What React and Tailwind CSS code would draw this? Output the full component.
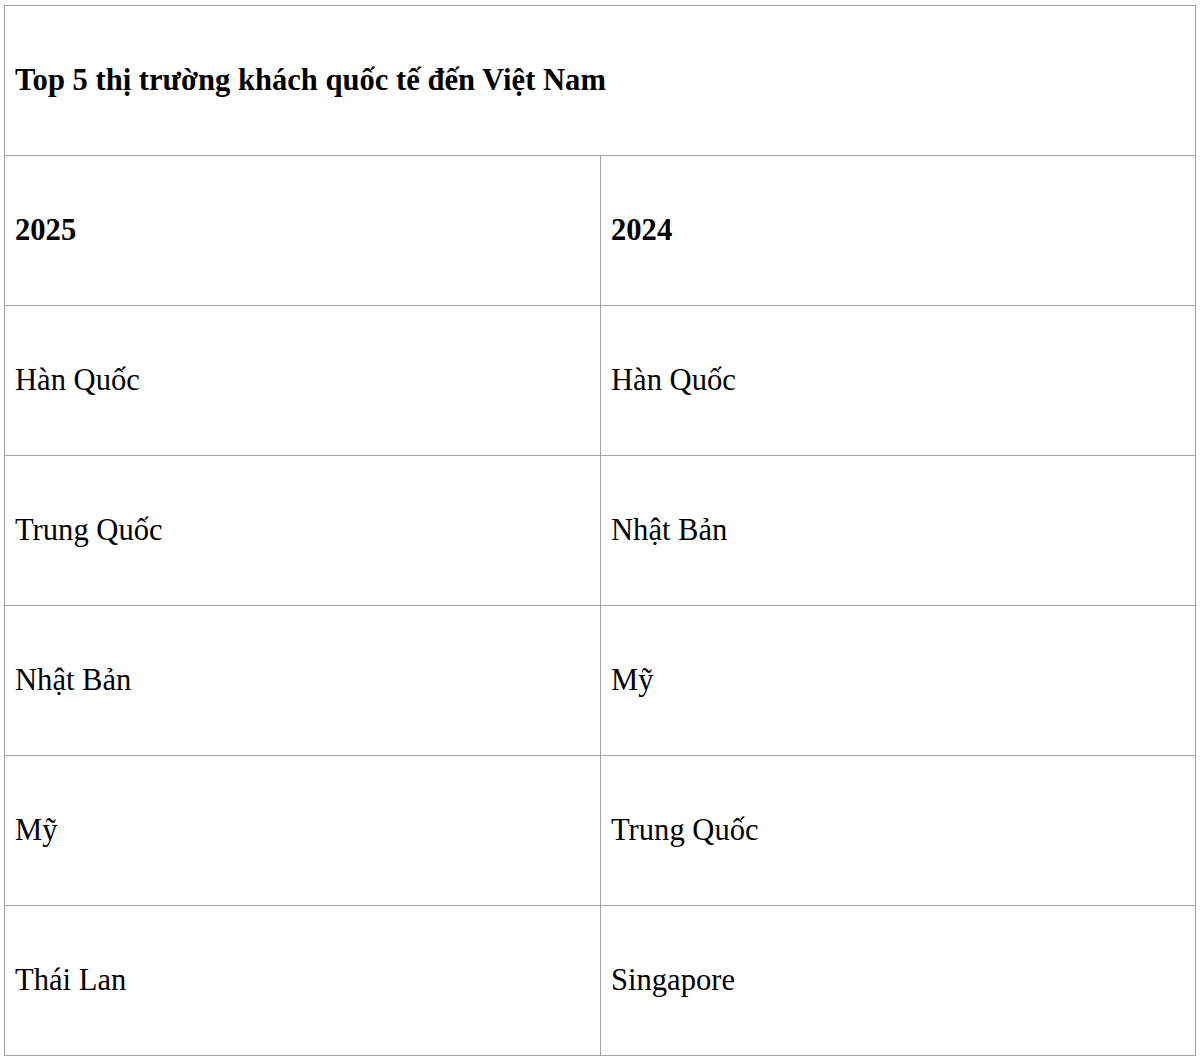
const rows = [
  ['Hàn Quốc', 'Hàn Quốc'],
  ['Trung Quốc', 'Nhật Bản'],
  ['Nhật Bản', 'Mỹ'],
  ['Mỹ', 'Trung Quốc'],
  ['Thái Lan', 'Singapore'],
];

const Cell = ({ children, bold, last }) => (
  <div
    className={`h-[150px] flex items-center pl-[10px] border-t-[1.5px] border-[#a4a4a4] ${last ? '' : 'border-r-[1.5px]'} ${bold ? 'font-bold' : ''}`}
  >
    {children}
  </div>
);

export default function App() {
  return (
    <div className="bg-white min-h-[1059px] pt-[5px] pl-[4px] pr-[4px] font-['Liberation_Serif','Times_New_Roman',serif] text-black text-[30.6px]">
      <div className="border-[1.5px] border-t-0 border-[#a4a4a4] w-[1192px]">
        <div className="h-[150px] flex items-center pl-[10px] border-t-[1.5px] border-[#a4a4a4] font-bold">
          Top 5 thị trường khách quốc tế đến Việt Nam
        </div>
        <div className="grid grid-cols-[596px_1fr]">
          <Cell bold>2025</Cell>
          <Cell bold last>2024</Cell>
          {rows.map(([a, b], i) => (
            <div key={i} className="contents">
              <Cell>{a}</Cell>
              <Cell last>{b}</Cell>
            </div>
          ))}
        </div>
      </div>
    </div>
  );
}
